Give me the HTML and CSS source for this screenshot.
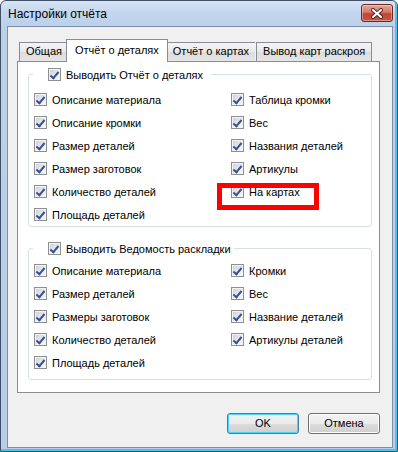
FILE: index.html
```html
<!DOCTYPE html>
<html>
<head>
<meta charset="utf-8">
<title>Настройки отчёта</title>
<link rel="stylesheet" href="styles.css">
</head>
<body>
<div class="window">
  <div class="titlebar">
    <span class="title">Настройки отчёта</span>
    <span class="close">
      <svg width="14" height="11" viewBox="0 0 14 11">
        <path d="M3 2 L11 9 M11 2 L3 9" stroke="#5a2a24" stroke-width="4" stroke-linecap="round"/>
        <path d="M3 2 L11 9 M11 2 L3 9" stroke="#fff" stroke-width="2" stroke-linecap="round"/>
      </svg>
    </span>
  </div>
  <div class="client">
    <div class="tabs">
      <div class="tab-strip">
        <span class="tab t1">Общая</span>
        <span class="tab t2 active">Отчёт о деталях</span>
        <span class="tab t3">Отчёт о картах</span>
        <span class="tab t4">Вывод карт раскроя</span>
      </div>
      <div class="tab-page">
        <fieldset class="group g1">
          <legend><span class="check"><span class="box"></span>Выводить Отчёт о деталях</span></legend>
          <div class="cols">
            <div class="col">
              <span class="check"><span class="box"></span>Описание материала</span>
              <span class="check"><span class="box"></span>Описание кромки</span>
              <span class="check"><span class="box"></span>Размер деталей</span>
              <span class="check"><span class="box"></span>Размер заготовок</span>
              <span class="check"><span class="box"></span>Количество деталей</span>
              <span class="check"><span class="box"></span>Площадь деталей</span>
            </div>
            <div class="col">
              <span class="check"><span class="box"></span>Таблица кромки</span>
              <span class="check"><span class="box"></span>Вес</span>
              <span class="check"><span class="box"></span>Названия деталей</span>
              <span class="check"><span class="box"></span>Артикулы</span>
              <span class="check marked"><span class="box"></span>На картах<span class="highlight"></span></span>
            </div>
          </div>
        </fieldset>
        <fieldset class="group g2">
          <legend><span class="check"><span class="box"></span>Выводить Ведомость раскладки</span></legend>
          <div class="cols">
            <div class="col">
              <span class="check"><span class="box"></span>Описание материала</span>
              <span class="check"><span class="box"></span>Размер деталей</span>
              <span class="check"><span class="box"></span>Размеры заготовок</span>
              <span class="check"><span class="box"></span>Количество деталей</span>
              <span class="check"><span class="box"></span>Площадь деталей</span>
            </div>
            <div class="col">
              <span class="check"><span class="box"></span>Кромки</span>
              <span class="check"><span class="box"></span>Вес</span>
              <span class="check"><span class="box"></span>Название деталей</span>
              <span class="check"><span class="box"></span>Артикулы деталей</span>
            </div>
          </div>
        </fieldset>
      </div>
    </div>
    <div class="buttons">
      <span class="btn default">OK</span>
      <span class="btn">Отмена</span>
    </div>
  </div>
</div>
</body>
</html>
```

FILE: styles.css
```css
*{
box-sizing:border-box;
}
body{
margin:0;
font-family:"Segoe UI","Liberation Sans",Arial,sans-serif;
font-size:11px;
color:#000;
}
.window{
width:398px;
height:452px;
border:1px solid #3f4f66;
border-radius:6px 6px 0 0;
background:linear-gradient(#d7e4f4, #c4d6ee 12px, #bcd0ea 25px, #b9cde8);
padding:0 4px 3px 6px;
display:flex;
flex-direction:column;
box-shadow:inset -2px -2px 0 #4fc3ea;
}
.titlebar{
height:25px;
display:flex;
justify-content:space-between;
padding-left:1px;
}
.title{
font-size:12px;
line-height:26px;
}
.close{
width:32px;
height:18px;
margin-top:3px;
border:1px solid #6d2a20;
border-radius:3px;
background:linear-gradient(#e3a89b, #d37a69 45%, #c2432f 55%, #c9574a);
box-shadow:inset 0 0 0 1px rgba(255,255,255,.35);
display:flex;
align-items:center;
justify-content:center;
}
.client{
flex:1;
border:1px solid #7d8fa8;
background:#f0f0f0;
padding:12px 12px 13px 9px;
display:flex;
flex-direction:column;
}
.tab-strip{
display:flex;
align-items:flex-end;
height:22px;
padding-left:2px;
}
.tab{
height:19px;
line-height:17px;
border:1px solid #898c95;
border-bottom:none;
border-right:none;
background:linear-gradient(#f5f5f5, #e8e8e8 50%, #dcdcdc 50%, #e5e5e5);
padding:0 6px;
white-space:nowrap;
}
.t4{
margin-left:1px;
border-right:1px solid #898c95;
}
.tab.active{
height:23px;
line-height:21px;
margin:0 -2px -1px;
border-right:1px solid #898c95;
background:#fff;
position:relative;
z-index:1;
padding:0 8px;
}
.tab-page{
border:1px solid #898c95;
background:#fff;
padding:4px 7px 12px 10px;
}
.group{
margin:0;
padding:5px 0 0 5px;
border:1px solid #d5dfe5;
border-radius:3px;
}
.g2{
margin-top:13px;
padding:2px 0 5px 5px;
}
legend{
margin-left:-1px;
padding:0 8px 0 15px;
height:17px;
display:flex;
align-items:center;
}
.g2 legend{
padding-right:3px;
}
.cols{
display:grid;
grid-template-columns:197px 1fr;
}
.col{
display:flex;
flex-direction:column;
}
.check{
display:flex;
align-items:center;
gap:5px;
height:23px;
white-space:nowrap;
}
legend .check{
height:17px;
}
.box{
width:13px;
height:13px;
flex:none;
border:1px solid #8f8f8f;
background:linear-gradient(135deg, #c9ced8, #eef0f3 70%, #f7f7f7);
box-shadow:inset 0 0 0 1px #f4f4f4;
position:relative;
}
.box::after{
content:"";
position:absolute;
left:3px;
top:1px;
width:3px;
height:7px;
border:solid #3b4f93;
border-width:0 2px 2px 0;
transform:rotate(40deg);
}
.marked{
position:relative;
}
.highlight{
position:absolute;
left:-14px;
top:3px;
width:102px;
height:27px;
border:5px solid #f00;
}
.buttons{
display:flex;
justify-content:flex-end;
gap:9px;
margin-top:20px;
}
.btn{
width:72px;
height:21px;
line-height:19px;
text-align:center;
border:1px solid #707070;
border-radius:3px;
background:linear-gradient(#f2f2f2, #ebebeb 50%, #dddddd 50%, #cfcfcf);
box-shadow:inset 0 0 0 1px #fcfcfc;
}
.btn.default{
border-color:#3c7fb1;
box-shadow:inset 0 0 0 1px #48d4fb;
}
```
